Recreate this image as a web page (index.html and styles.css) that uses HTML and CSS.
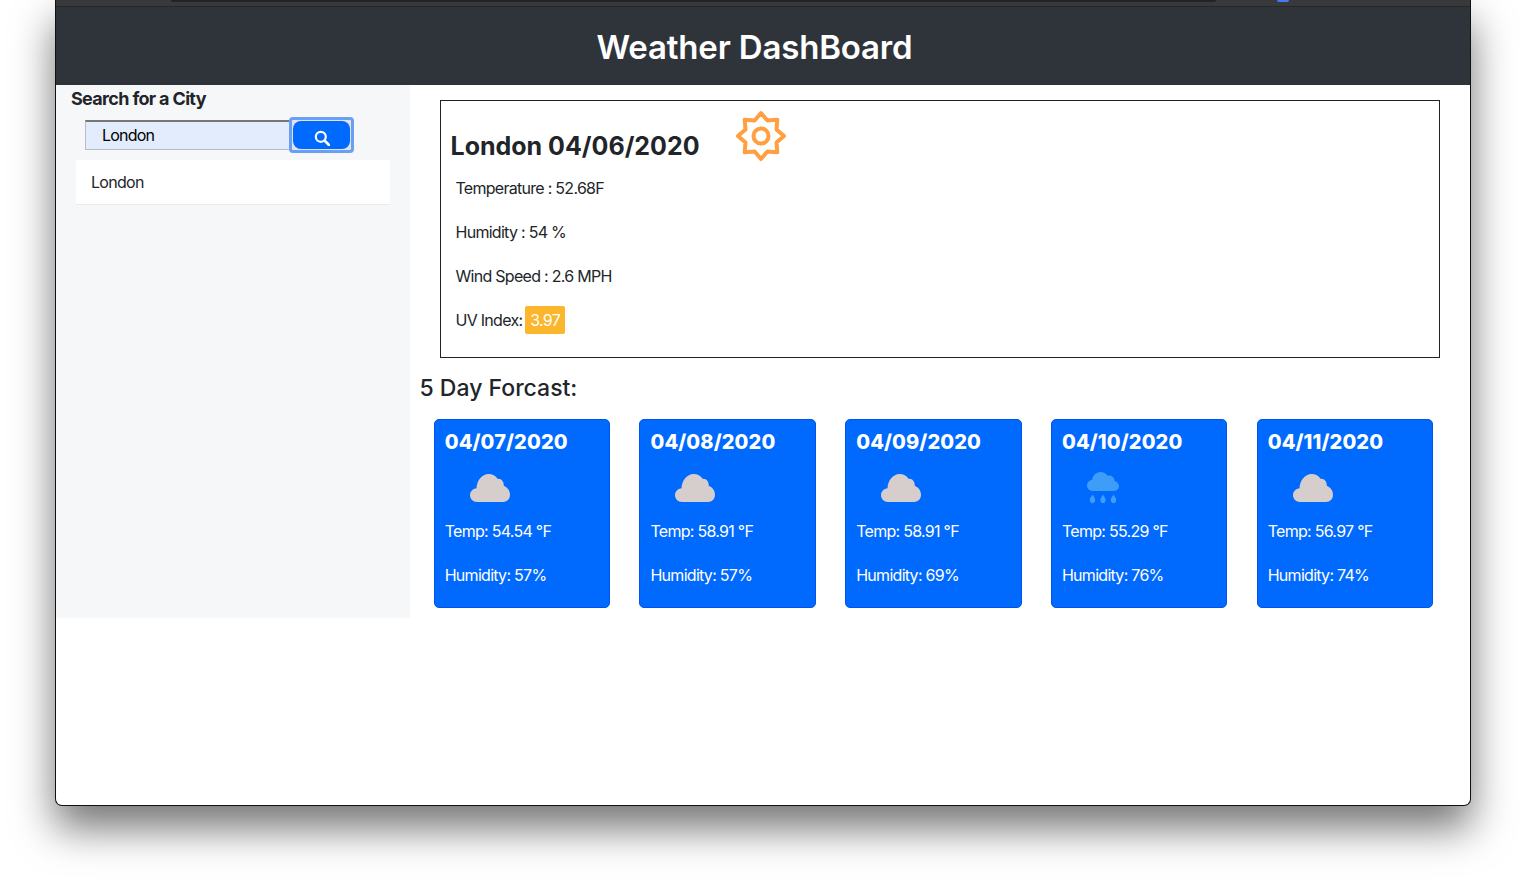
FILE: index.html
```html
<!DOCTYPE html>
<html lang="en">
<head>
<meta charset="utf-8">
<title>Weather DashBoard</title>
<link rel="stylesheet" href="styles.css">
</head>
<body>
<svg class="defs" width="0" height="0" aria-hidden="true">
  <symbol id="cloud" viewBox="0 0 40 28">
    <path d="M7 28C3 28 0 25 0 21.300C0 17.500 3 14.600 6.500 14.300C6.800 6.500 12 0 18.500 0C22.500 0 25.800 2 27.500 4.800C31 4.300 34 7.200 33.800 11.800C37.500 13.300 40 16.800 40 20.800C40 25 37 28 33 28Z"/>
  </symbol>
  <symbol id="rain" viewBox="0 0 32 32">
    <path d="M6 19C2.500 19 0 16.500 0 13.500C0 10.500 2.200 8.200 5 8C5.800 3.200 9.500 0 13.500 0C16.500 0 19 1.500 20.500 3.800C24.500 2.800 27.500 5.500 27.500 9C30.200 9.800 32 11.500 32 14.300C32 17 29.800 19 27 19Z"/>
    <path d="M5.500 22.500C7.200 25.300 8.200 26.500 8.200 28.300C8.200 30 6.900 31.200 5.500 31.200C4.100 31.200 2.800 30 2.800 28.300C2.800 26.500 3.800 25.300 5.500 22.500Z"/>
    <path d="M16 22.500C17.700 25.300 18.700 26.500 18.700 28.300C18.700 30 17.400 31.200 16 31.200C14.600 31.200 13.300 30 13.300 28.300C13.300 26.500 14.300 25.300 16 22.500Z"/>
    <path d="M26.500 22.500C28.200 25.300 29.200 26.500 29.200 28.300C29.200 30 27.900 31.200 26.500 31.200C25.100 31.200 23.800 30 23.800 28.300C23.800 26.500 24.800 25.300 26.500 22.500Z"/>
  </symbol>
</svg>
<div class="window">
  <div class="toolbar"><div class="address"></div><div class="ext"></div></div>
  <header class="masthead"><h1>Weather DashBoard</h1></header>
  <div class="content">
    <aside class="sidebar">
      <h5>Search for a City</h5>
      <form class="search">
        <input class="search-input" type="text" value="London">
        <button class="search-btn" type="button" aria-label="Search">
          <span class="search-face">
            <svg width="16" height="16" viewBox="0 0 16 16" fill="none" stroke="#fff"><circle cx="6.800" cy="6.800" r="5" stroke-width="2.200"/><path d="M10.500 10.500L15 15" stroke-width="2.600" stroke-linecap="round"/></svg>
          </span>
        </button>
      </form>
      <ul class="cities"><li>London</li></ul>
    </aside>
    <main class="main">
      <section class="today">
        <div class="today-head">
          <h2>London 04/06/2020</h2>
          <svg class="sun" width="52" height="52" viewBox="0 0 52 52" fill="none" stroke="#ff9f40" stroke-width="4" stroke-linejoin="round">
            <path d="M26 3L32.400 10.500L42.300 9.700L41.500 19.600L49 26L41.500 32.400L42.300 42.300L32.400 41.500L26 49L19.600 41.500L9.700 42.300L10.500 32.400L3 26L10.500 19.600L9.700 9.700L19.600 10.500Z"/>
            <circle cx="26" cy="26" r="7.500"/>
          </svg>
        </div>
        <p>Temperature : 52.68F</p>
        <p>Humidity : 54 %</p>
        <p>Wind Speed : 2.6 MPH</p>
        <p>UV Index: <span class="uv">3.97</span></p>
      </section>
      <h3>5 Day Forcast:</h3>
      <div class="cards">
        <article class="card">
          <h4>04/07/2020</h4>
          <svg class="icon cloud"><use href="#cloud"/></svg>
          <p>Temp: 54.54 °F</p>
          <p>Humidity: 57%</p>
        </article>
        <article class="card">
          <h4>04/08/2020</h4>
          <svg class="icon cloud"><use href="#cloud"/></svg>
          <p>Temp: 58.91 °F</p>
          <p>Humidity: 57%</p>
        </article>
        <article class="card">
          <h4>04/09/2020</h4>
          <svg class="icon cloud"><use href="#cloud"/></svg>
          <p>Temp: 58.91 °F</p>
          <p>Humidity: 69%</p>
        </article>
        <article class="card">
          <h4>04/10/2020</h4>
          <svg class="icon rain"><use href="#rain"/></svg>
          <p>Temp: 55.29 °F</p>
          <p>Humidity: 76%</p>
        </article>
        <article class="card">
          <h4>04/11/2020</h4>
          <svg class="icon cloud"><use href="#cloud"/></svg>
          <p>Temp: 56.97 °F</p>
          <p>Humidity: 74%</p>
        </article>
      </div>
    </main>
  </div>
</div>
</body>
</html>
```
FILE: styles.css
```css
* { box-sizing: border-box; }
html, body { height: 100%; }
body {
  margin: 0;
  padding-left: 55px;
  background: #fff;
  overflow: hidden;
  font-family: Inter, "Liberation Sans", sans-serif;
  font-size: 16px;
  color: #212529;
  letter-spacing: -0.72px;
}
.defs { position: absolute; }
.window {
  width: 1416px;
  height: 806px;
  background: #fff;
  border: 1px solid #111;
  border-top: 0;
  border-radius: 0 0 7px 7px;
  box-shadow: 0 22px 42px rgba(0, 0, 0, 0.55);
}
.toolbar {
  height: 7px;
  background: #39393b;
  border-bottom: 1px solid #262729;
  position: relative;
}
.address {
  position: absolute;
  left: 115px;
  width: 1045px;
  top: 0;
  height: 2px;
  background: #232325;
  border-radius: 0 0 6px 6px;
}
.ext {
  position: absolute;
  left: 1221px;
  width: 12px;
  top: 0;
  height: 2px;
  background: #3f7cf5;
  border-radius: 0 0 2px 2px;
}
.masthead {
  height: 78px;
  background: #2f343b;
  display: flex;
  align-items: center;
  justify-content: center;
  padding: 1px 17px 0 0;
}
h1 {
  margin: 0;
  color: #fff;
  font-size: 33px;
  font-weight: 600;
  letter-spacing: -0.17px;
  line-height: 40px;
}
.content { display: flex; align-items: flex-start; }
.sidebar {
  width: 354px;
  height: 533px;
  flex: none;
  background: #f6f7f9;
  padding: 3px 20px 0 15px;
}
h5 {
  margin: 0;
  font-size: 18px;
  font-weight: 700;
  line-height: 22px;
  letter-spacing: -0.67px;
}
.search {
  display: flex;
  align-items: center;
  margin: 8px 0 0 14px;
  height: 34px;
}
.search-input {
  width: 205px;
  height: 30px;
  margin-top: -1px;
  padding: 0 0 1px 16px;
  background: #e3ecfc;
  border: 1px solid #bdbdbd;
  border-top: 2px solid #777;
  border-radius: 0;
  font: 16px Inter, "Liberation Sans", sans-serif;
  letter-spacing: -0.8px;
  color: #000;
  outline: 0;
}
.search-btn {
  width: 65px;
  height: 36px;
  margin-left: -1px;
  padding: 0;
  background: #dfe3ea;
  border: 3px solid #6a9ff2;
  border-radius: 4px;
  flex: none;
  display: flex;
}
.search-face {
  flex: 1;
  margin: 1px;
  padding-top: 5px;
  background: #0069fe;
  border-radius: 8px;
  display: flex;
  align-items: center;
  justify-content: center;
}
.cities {
  list-style: none;
  margin: 8px 0 0 5px;
  padding: 0;
}
.cities li {
  height: 45px;
  padding-left: 15px;
  background: #fff;
  border-bottom: 1px solid #e9eaec;
  line-height: 44px;
}
.main { flex: 1; padding: 15px 30px 0 10px; }
.today {
  margin-left: 20px;
  width: 1000px;
  height: 258px;
  border: 1px solid #222;
  padding: 9px 10px 0 9.500px;
}
.today-head { display: flex; height: 66px; align-items: flex-start; }
h2 {
  margin: 20px 0 0;
  font-size: 25px;
  font-weight: 700;
  line-height: 32px;
  letter-spacing: 0;
}
.sun { margin: 0 0 0 35.500px; flex: none; }
.today p {
  margin: 0 0 20px 5px;
  height: 24px;
  line-height: 24px;
}
.uv {
  display: inline-block;
  height: 28px;
  width: 40px;
  margin: -2px 0 -2px -1px;
  text-align: center;
  line-height: 28px;
  background: #fbb62c;
  color: #fff;
  border-radius: 2px;
}
h3 {
  margin: 16px 0 16px -0.500px;
  font-size: 23px;
  font-weight: 500;
  line-height: 29px;
  letter-spacing: 0;
}
.cards {
  display: grid;
  grid-template-columns: repeat(5, 176.500px);
  column-gap: 29.250px;
  margin-left: 13.700px;
}
.card {
  height: 189px;
  background: #0069fe;
  border: 1px solid #0054ee;
  border-radius: 5px;
  padding: 9px 10px 0;
  color: #fff;
}
h4 {
  margin: 0;
  font-size: 20px;
  font-weight: 800;
  line-height: 26px;
  letter-spacing: 0.1px;
}
.icon { display: block; }
.cloud { width: 40px; height: 28px; margin: 19px 0 17px 25px; fill: #d6cdcd; }
.rain { width: 32px; height: 32px; margin: 17px 0 15px 25px; fill: #3f9cf7; }
.card p {
  margin: 0 0 20px;
  line-height: 24px;
}
```
